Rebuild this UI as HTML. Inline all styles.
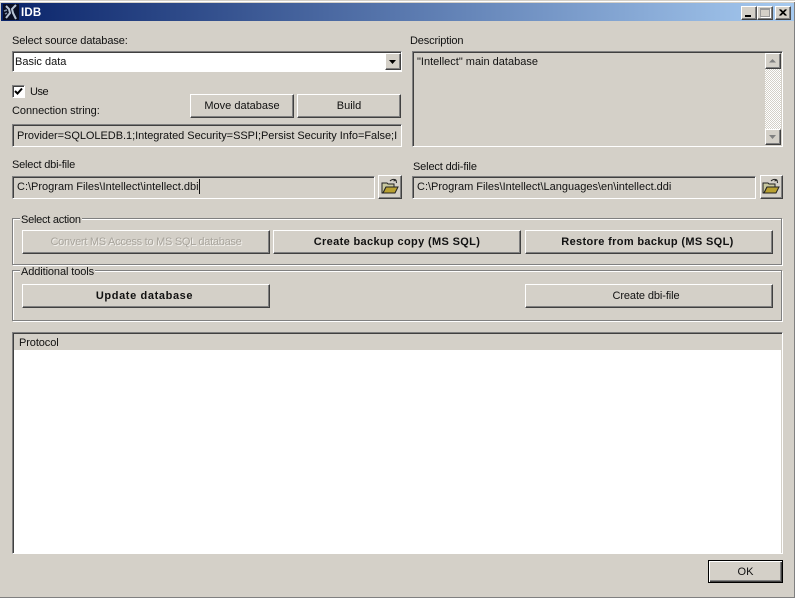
<!DOCTYPE html>
<html><head><meta charset="utf-8">
<style>
html,body{margin:0;padding:0}
body{width:795px;height:598px;overflow:hidden;background:#d4d0c8;position:relative;font-family:"Liberation Sans",sans-serif;font-size:11px;color:#111}
div{position:absolute;box-sizing:border-box}
.t{white-space:nowrap;line-height:13px;letter-spacing:0}
.sunk{background:#d4d0c8;border-top:1px solid #808080;border-left:1px solid #808080;border-right:1px solid #fff;border-bottom:1px solid #fff;box-shadow:inset 1px 1px 0 #404040}
.btn{background:#d4d0c8;border-top:1px solid #fff;border-left:1px solid #fff;border-right:1px solid #404040;border-bottom:1px solid #404040;box-shadow:inset -1px -1px 0 #808080;text-align:center;white-space:nowrap;line-height:23px}
.b{font-weight:bold;letter-spacing:.35px}
.grp{border:1px solid #808080;box-shadow:1px 1px 0 #fff,inset 1px 1px 0 #fff}
.lab{background:#d4d0c8;padding:0 1px}
svg{position:absolute;display:block}
</style></head><body>
<div style="left:0;top:1px;width:795px;height:1px;background:#fff"></div>
<div style="left:794px;top:2px;width:1px;height:596px;background:#808080"></div>
<div style="left:0;top:597px;width:795px;height:1px;background:#808080"></div>
<div style="left:1px;top:3px;width:793px;height:18px;background:linear-gradient(90deg,#0a246a,#a6caf0)"></div>
<svg style="left:3px;top:4px" width="16" height="16" viewBox="0 0 16 16"><rect width="16" height="16" fill="#0b0f24"/><path d="M3 2l3 3 1 4-4 5M13 1l-4 4 1 4 3 6" stroke="#b8c4d4" stroke-width="2" fill="none"/><path d="M1 7l3-1M2 10l2-1" stroke="#8090a8" stroke-width="1.500"/></svg>
<div class="t" style="left:21px;top:7px;color:#fff;font-weight:bold;font-size:11.500px;letter-spacing:.2px">IDB</div>

<div class="btn" style="left:741px;top:6px;width:16px;height:14px;border-right-color:#505050"></div>
<div style="left:745px;top:15px;width:6px;height:2px;background:#000"></div>
<div class="btn" style="left:757px;top:6px;width:16px;height:14px;border-right-color:#505050"></div>
<div style="left:760px;top:8px;width:10px;height:9px;border:1px solid #999;border-top-width:2px;box-shadow:1px 1px 0 #fff"></div>
<div class="btn" style="left:775px;top:6px;width:16px;height:14px;border-right-color:#505050"></div>
<svg style="left:775px;top:6px" width="16" height="14"><path d="M4.500 3.500l6 6M5.500 3.500l6 6M10.500 3.500l-6 6M11.500 3.500l-6 6" stroke="#000" stroke-width="1"/></svg>

<div class="t" style="left:12px;top:35px;letter-spacing:-.1px">Select source database:</div>
<div class="sunk" style="left:12px;top:51px;width:390px;height:21px;background:#fff"></div>
<div class="t" style="left:15px;top:56px">Basic data</div>
<div class="btn" style="left:385px;top:53px;width:16px;height:17px"></div>
<svg style="left:385px;top:53px" width="16" height="17"><path d="M4 7h7l-3.500 4z" fill="#000"/></svg>

<div class="sunk" style="left:12px;top:85px;width:13px;height:13px;background:#fff"></div>
<svg style="left:12px;top:85px" width="13" height="13"><path d="M3 6l2.500 2.500L10 3.500" stroke="#000" stroke-width="2" fill="none"/></svg>
<div class="t" style="left:30px;top:86px;letter-spacing:-.5px">Use</div>
<div class="t" style="left:12px;top:105px;letter-spacing:-.05px">Connection string:</div>
<div class="btn" style="left:190px;top:94px;width:104px;height:24px">Move database</div>
<div class="btn" style="left:297px;top:94px;width:104px;height:24px">Build</div>
<div class="sunk" style="left:12px;top:124px;width:390px;height:23px"></div>
<div class="t" style="left:17px;top:130px;width:381px;overflow:hidden;letter-spacing:-.04px">Provider=SQLOLEDB.1;Integrated Security=SSPI;Persist Security Info=False;I</div>

<div class="t" style="left:12px;top:159px;letter-spacing:-.2px">Select dbi-file</div>
<div class="sunk" style="left:12px;top:176px;width:363px;height:23px"></div>
<div class="t" style="left:17px;top:181px">C:\Program Files\Intellect\intellect.dbi</div>
<div style="left:199px;top:179px;width:1px;height:15px;background:#111"></div>
<div class="btn" style="left:378px;top:175px;width:24px;height:24px"></div>
<svg style="left:381px;top:178px" width="18" height="17" viewBox="0 0 18 17"><path d="M1 5h5l1 1h6v3H5L2 15H1z" fill="#c8c8a0" stroke="#222" stroke-width="1"/><path d="M2 15l3-6h12l-3 6z" fill="#b8a030" stroke="#222" stroke-width="1"/><path d="M9 3c2-2 4-2 6-1M15 2l.5 3M15 2l-2.500 1" stroke="#222" fill="none"/></svg>

<div class="t" style="left:410px;top:35px;letter-spacing:-.15px">Description</div>
<div class="sunk" style="left:412px;top:51px;width:371px;height:96px"></div>
<div class="t" style="left:417px;top:56px">"Intellect" main database</div>
<div style="left:765px;top:69px;width:16px;height:60px;background:repeating-conic-gradient(#fff 0 25%,#d4d0c8 0 50%) 0 0/2px 2px"></div>
<div class="btn" style="left:765px;top:53px;width:16px;height:16px"></div>
<svg style="left:765px;top:53px" width="16" height="16"><path d="M4 9.500h7L7.500 6z" fill="#808080"/></svg>
<div class="btn" style="left:765px;top:129px;width:16px;height:16px"></div>
<svg style="left:765px;top:129px" width="16" height="16"><path d="M4 6h7L7.500 10z" fill="#808080"/></svg>

<div class="t" style="left:413px;top:161px;letter-spacing:-.15px">Select ddi-file</div>
<div class="sunk" style="left:412px;top:176px;width:344px;height:23px"></div>
<div class="t" style="left:417px;top:181px">C:\Program Files\Intellect\Languages\en\intellect.ddi</div>
<div class="btn" style="left:760px;top:175px;width:23px;height:24px"></div>
<svg style="left:762px;top:178px" width="18" height="17" viewBox="0 0 18 17"><path d="M1 5h5l1 1h6v3H5L2 15H1z" fill="#c8c8a0" stroke="#222" stroke-width="1"/><path d="M2 15l3-6h12l-3 6z" fill="#b8a030" stroke="#222" stroke-width="1"/><path d="M9 3c2-2 4-2 6-1M15 2l.5 3M15 2l-2.500 1" stroke="#222" fill="none"/></svg>

<div class="grp" style="left:12px;top:218px;width:770px;height:47px"></div>
<div class="t lab" style="left:20px;top:214px;letter-spacing:-.25px">Select action</div>
<div class="btn" style="left:22px;top:230px;width:248px;height:24px;color:#a8a49c;text-shadow:1px 1px 0 #f4f2ee;letter-spacing:-.27px">Convert MS Access to MS SQL database</div>
<div class="btn b" style="left:273px;top:230px;width:248px;height:24px">Create backup copy (MS SQL)</div>
<div class="btn b" style="left:525px;top:230px;width:248px;height:24px;padding-right:3px">Restore from backup (MS SQL)</div>

<div class="grp" style="left:12px;top:270px;width:770px;height:51px"></div>
<div class="t lab" style="left:20px;top:266px;letter-spacing:-.1px">Additional tools</div>
<div class="btn b" style="left:22px;top:284px;width:248px;height:24px;padding-right:3px;letter-spacing:.62px">Update database</div>
<div class="btn" style="left:525px;top:284px;width:248px;height:24px;letter-spacing:-.1px;padding-right:6px">Create dbi-file</div>

<div class="sunk" style="left:12px;top:332px;width:771px;height:222px"></div>
<div class="t" style="left:19px;top:337px;letter-spacing:-.1px">Protocol</div>
<div style="left:14px;top:350px;width:767px;height:203px;background:#fff"></div>

<div class="btn" style="left:708px;top:560px;width:75px;height:23px;border:1px solid #000;box-shadow:inset 1px 1px 0 #fff,inset -1px -1px 0 #404040,inset -2px -2px 0 #808080;line-height:22px">OK</div>
</body></html>
